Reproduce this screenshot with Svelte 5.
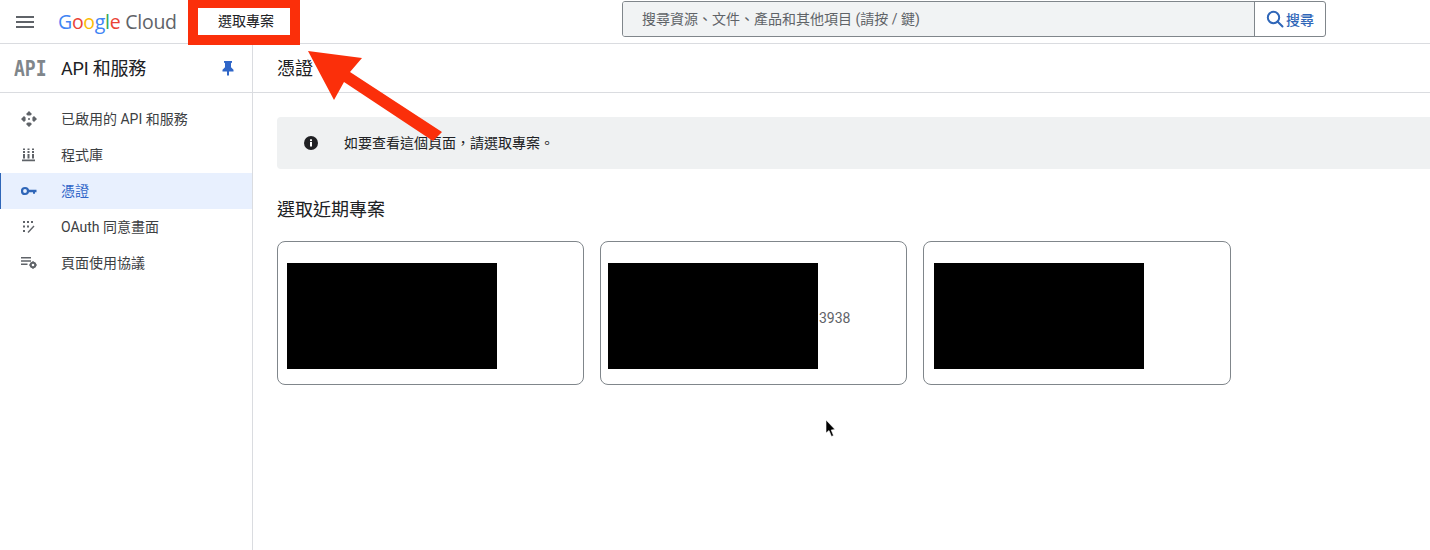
<script>
  const nav = [
    { label: '已啟用的 API 和服務', icon: 'api' },
    { label: '程式庫', icon: 'lib' },
    { label: '憑證', icon: 'key', active: true },
    { label: 'OAuth 同意畫面', icon: 'oauth' },
    { label: '頁面使用協議', icon: 'usage' }
  ];
  const cards = [
    { pad: 9, extra: '', w: 307 },
    { pad: 7, extra: '3938', w: 307 },
    { pad: 10, extra: '', w: 308 }
  ];
</script>

<div class="page">
  <header class="topbar">
    <button class="menu" aria-label="menu">
      <svg width="18" height="12" viewBox="0 0 18 12"><path d="M0 0h18v2H0zM0 5h18v2H0zM0 10h18v2H0z" fill="#5f6368"/></svg>
    </button>
    <div class="logo"><span class="b">G</span><span class="r">o</span><span class="y">o</span><span class="b">g</span><span class="g">l</span><span class="r">e</span><span class="cloud">Cloud</span></div>
    <div class="picker"><span>選取專案</span></div>
    <div class="search">
      <div class="input">搜尋資源、文件、產品和其他項目 (請按 / 鍵)</div>
      <div class="go">
        <svg width="18" height="18" viewBox="0 0 18 18" fill="none" stroke="#2f66b8" stroke-width="2"><circle cx="7.5" cy="7.5" r="5.7"/><path d="M11.5 11.5L16.5 16.5" stroke-linecap="round"/></svg>
        <span>搜尋</span>
      </div>
    </div>
  </header>

  <div class="body">
    <aside class="side">
      <div class="side-head">
        <span class="api-mark">API</span>
        <span class="side-title">API 和服務</span>
        <svg class="pin" width="12" height="16" viewBox="0 0 12 16"><path d="M2 1h8v1.500L9 3.300v3.900L11.500 9.800V11.500H7V15.500H5V11.500H.5V9.800L3 7.200V3.300L2 2.500z" fill="#2f66c8"/></svg>
      </div>
      <nav class="nav">
        {#each nav as item}
          <div class="item" class:active={item.active}>
            <span class="ico">
              {#if item.icon === 'api'}
                <svg width="16" height="16" viewBox="0 0 16 16" fill="#5f6368"><path d="M8 0l3 3-1.600 1.600H6.600L5 3zM8 16l-3-3 1.600-1.600h2.800L11 13zM0 8l3-3 1.600 1.600v2.800L3 11zM16 8l-3 3-1.600-1.600V6.600L13 5z"/><circle cx="8" cy="8" r="1"/></svg>
              {:else if item.icon === 'lib'}
                <svg width="14" height="14" viewBox="0 0 14 14" fill="#5f6368"><path d="M0 11.500h13v1.800H0zM1 6h2v4.500H1zM5.500 6h2v4.500h-2zM10 6h2v4.500h-2zM1 3h2v2H1zM5.500 3h2v2h-2zM10 3h2v2h-2zM1 .5h2v1.500H1zM5.500 .5h2v1.500h-2zM10 .5h2v1.500h-2z"/></svg>
              {:else if item.icon === 'key'}
                <svg width="16" height="10" viewBox="0 0 16 10"><circle cx="4" cy="5" r="3" fill="none" stroke="#2f66b8" stroke-width="2.200"/><path d="M6.500 3.800h9v2.400h-1.500v1.500h-2V6.200H6.500z" fill="#2f66b8"/></svg>
              {:else if item.icon === 'oauth'}
                <svg width="12" height="12" viewBox="0 0 12 12" fill="#5f6368"><rect x="0" y="0" width="2" height="2"/><rect x="4" y="0" width="2" height="2"/><rect x="8" y="0" width="2" height="2"/><rect x="0" y="4.500" width="2" height="2"/><rect x="4" y="4.500" width="2" height="2"/><rect x="0" y="9" width="2" height="2"/><path d="M4.500 11l6-6.500 1 .9-6 6.600z"/></svg>
              {:else}
                <svg width="16" height="12" viewBox="0 0 16 12" fill="#5f6368"><path d="M0 0h10v1.500H0zM0 3.300h10v1.500H0zM0 6.600h6.500v1.500H0z"/><circle cx="12" cy="8" r="2.300" fill="none" stroke="#5f6368" stroke-width="2"/><path d="M11.200 4.300h1.600v1.500h-1.600zM11.200 10.200h1.600v1.500h-1.600zM8.300 7.200h1.500v1.600H8.300zM14.200 7.200h1.500v1.600h-1.500z"/></svg>
              {/if}
            </span>
            <span class="label">{item.label}</span>
          </div>
        {/each}
      </nav>
    </aside>

    <main class="main">
      <div class="title-bar"><h1>憑證</h1></div>
      <div class="content">
        <div class="banner">
          <svg width="14" height="14" viewBox="0 0 14 14"><circle cx="7" cy="7" r="7" fill="#202124"/><rect x="6" y="6" width="2" height="4.500" fill="#fff"/><rect x="6" y="3.300" width="2" height="1.800" fill="#fff"/></svg>
          <span>如要查看這個頁面，請選取專案。</span>
        </div>
        <h2>選取近期專案</h2>
        <div class="cards">
          {#each cards as c}
            <div class="card" style="padding-left:{c.pad}px;width:{c.w}px">
              <div class="mask"></div>
              {#if c.extra}<span class="extra">{c.extra}</span>{/if}
            </div>
          {/each}
        </div>
      </div>
    </main>
  </div>

  <svg class="arrow" width="200" height="120" viewBox="0 0 200 120">
    <path d="M8 7L62 14L50 28L142 88L133 97L44 38L34 56Z" fill="#fb2f0a"/>
  </svg>

  <svg class="cursor" width="12" height="18" viewBox="0 0 12 18">
    <path d="M1 0L1 13L4 10.500L6.500 16.500L8.500 15.500L6.200 10L10 9.500Z" fill="#000" stroke="#fff" stroke-width=".6"/>
  </svg>
</div>

<style>
  :global(body) {
    margin: 0;
    background: #fff;
  }
  .page {
    position: relative;
    width: 1430px;
    height: 550px;
    overflow: hidden;
    background: #fff;
    color: #3c4043;
    font-family: Roboto, "Noto Sans CJK TC", sans-serif;
  }
  .topbar {
    height: 43px;
    border-bottom: 1px solid #dadce0;
    display: flex;
    align-items: center;
    box-sizing: content-box;
  }
  .menu {
    width: 18px;
    height: 12px;
    margin: 0 0 0 16px;
    padding: 0;
    border: 0;
    background: none;
    display: flex;
  }
  .logo {
    margin-left: 24px;
    width: 130px;
    font-family: "Open Sans", sans-serif;
    font-size: 19.5px;
    letter-spacing: -0.300px;
    white-space: nowrap;
    line-height: 38px;
  }
  .b { color: #4285f4; }
  .r { color: #ea4335; }
  .y { color: #fbbc05; }
  .g { color: #34a853; }
  .cloud { color: #5f6368; margin-left: 5px; }
  .picker {
    position: absolute;
    left: 188px;
    top: 0;
    width: 88px;
    height: 23px;
    padding: 0 0 4px 4px;
    border: solid #fb2f0a;
    border-width: 8px 10px 10px;
    background: #fff;
    display: flex;
    align-items: center;
    justify-content: center;
    font-size: 14px;
    color: #202124;
  }
  .search {
    position: absolute;
    left: 622px;
    top: 1px;
    width: 702px;
    height: 34px;
    border: 1px solid #80868b;
    border-radius: 3px;
    display: flex;
    overflow: hidden;
  }
  .input {
    flex: 1;
    background: #f1f3f4;
    color: #5f6368;
    font-size: 14px;
    line-height: 34px;
    padding-left: 19px;
  }
  .go {
    width: 70px;
    border-left: 1px solid #80868b;
    display: flex;
    align-items: center;
    justify-content: center;
    gap: 2px;
    color: #2f66b8;
    font-size: 14px;
    font-weight: 500;
  }
  .body {
    display: flex;
    height: 506px;
  }
  .side {
    width: 252px;
    flex: none;
    border-right: 1px solid #dadce0;
  }
  .side-head {
    height: 48px;
    border-bottom: 1px solid #dadce0;
    display: flex;
    align-items: center;
    position: relative;
  }
  .api-mark {
    width: 32px;
    margin-left: 14px;
    font-family: "DejaVu Sans Mono", monospace;
    font-size: 22px;
    font-weight: 700;
    color: #80868b;
    transform: scaleX(0.82);
    transform-origin: left center;
  }
  .side-title {
    margin-left: 15px;
    padding-bottom: 2px;
    font-size: 18px;
    letter-spacing: -0.200px;
    color: #202124;
  }
  .pin {
    position: absolute;
    left: 222px;
    top: 16px;
  }
  .nav {
    padding-top: 8px;
  }
  .item {
    height: 36px;
    display: flex;
    align-items: center;
    font-size: 14px;
    color: #3c4043;
    box-sizing: border-box;
  }
  .item.active {
    background: #e8f0fe;
    color: #2f66c8;
    box-shadow: inset 1px 0 0 #2f66b8;
  }
  .label {
    padding-bottom: 2px;
  }
  .ico {
    width: 18px;
    margin-left: 20px;
    margin-right: 23px;
    display: flex;
    justify-content: center;
  }
  .main {
    flex: 1;
    min-width: 0;
  }
  .title-bar {
    height: 48px;
    border-bottom: 1px solid #dadce0;
    display: flex;
    align-items: center;
    padding-left: 24px;
  }
  h1 {
    margin: 0 0 2px;
    font-size: 18px;
    font-weight: 400;
    color: #202124;
  }
  .content {
    padding: 24px 0 0 24px;
  }
  .banner {
    height: 52px;
    background: #eff1f2;
    border-radius: 4px 0 0 4px;
    display: flex;
    align-items: center;
    padding-left: 27px;
    gap: 26px;
    font-size: 14px;
    color: #202124;
  }
  .banner span {
    padding-bottom: 2px;
  }
  h2 {
    margin: 29px 0 0;
    font-size: 18px;
    line-height: 24px;
    font-weight: 400;
    color: #202124;
  }
  .cards {
    display: flex;
    gap: 16px;
    margin-top: 19px;
  }
  .card {
    height: 144px;
    box-sizing: border-box;
    border: 1px solid #80868b;
    border-radius: 8px;
    display: flex;
    align-items: center;
    flex: none;
    padding-top: 6px;
  }
  .mask {
    width: 210px;
    height: 106px;
    background: #000;
    flex: none;
  }
  .extra {
    font-size: 14px;
    margin: 4px 0 0 1px;
    color: #5f6368;
  }
  .arrow {
    position: absolute;
    left: 300px;
    top: 44px;
  }
  .cursor {
    position: absolute;
    left: 825px;
    top: 420px;
  }
</style>
